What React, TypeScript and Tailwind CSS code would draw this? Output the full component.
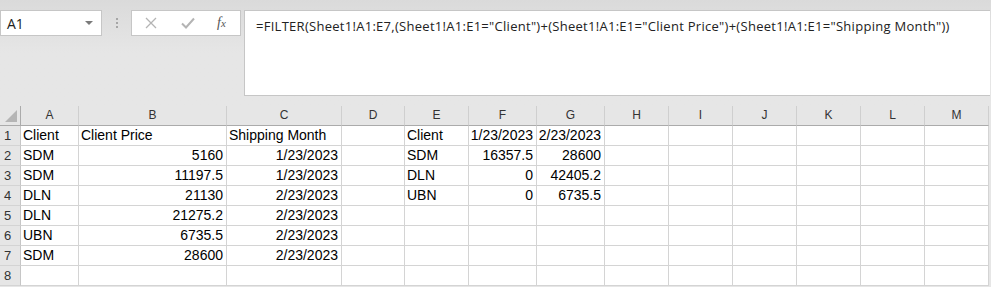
import { Fragment } from 'react';

const columns = [
  { key: 'A', width: 'w-[58px]' },
  { key: 'B', width: 'w-[148px]' },
  { key: 'C', width: 'w-[115px]' },
  { key: 'D', width: 'w-[63px]' },
  { key: 'E', width: 'w-[64px]' },
  { key: 'F', width: 'w-[68px]' },
  { key: 'G', width: 'w-[68px]' },
  { key: 'H', width: 'w-[64px]' },
  { key: 'I', width: 'w-[64px]' },
  { key: 'J', width: 'w-[64px]' },
  { key: 'K', width: 'w-[64px]' },
  { key: 'L', width: 'w-[64px]' },
  { key: 'M', width: 'w-[64px]' },
];

type Cell = string | { v: string; right: true };

const r = (v: string): Cell => ({ v, right: true });

// sheet contents, one array per row, columns A..G
const rows: Cell[][] = [
  ['Client', 'Client Price', 'Shipping Month', '', 'Client', r('1/23/2023'), r('2/23/2023')],
  ['SDM', r('5160'), r('1/23/2023'), '', 'SDM', r('16357.5'), r('28600')],
  ['SDM', r('11197.5'), r('1/23/2023'), '', 'DLN', r('0'), r('42405.2')],
  ['DLN', r('21130'), r('2/23/2023'), '', 'UBN', r('0'), r('6735.5')],
  ['DLN', r('21275.2'), r('2/23/2023')],
  ['UBN', r('6735.5'), r('2/23/2023')],
  ['SDM', r('28600'), r('2/23/2023')],
  [],
];

const formula =
  '=FILTER(Sheet1!A1:E7,(Sheet1!A1:E1="Client")+(Sheet1!A1:E1="Client Price")+(Sheet1!A1:E1="Shipping Month"))';

function FormulaBar() {
  return (
    <div className="h-[106px] pt-[10px] flex items-start bg-gradient-to-b from-[#dadada] via-[#e6e6e6] to-[#e6e6e6]">
      {/* Name box */}
      <div className="w-[102px] h-[26px] bg-white border border-[#c6c6c6] flex items-center justify-between pl-[6px] pr-[8px]">
        <span className="text-[14px] text-[#222] font-['Open_Sans',sans-serif]">A1</span>
        <span className="w-0 h-0 border-l-[4px] border-r-[4px] border-t-[4px] border-l-transparent border-r-transparent border-t-[#7a7a7a]" />
      </div>

      {/* grip dots */}
      <div className="ml-[14px] h-[26px] flex flex-col justify-center gap-[2px]">
        <span className="w-[2px] h-[2px] bg-[#a6a6a6]" />
        <span className="w-[2px] h-[2px] bg-[#a6a6a6]" />
        <span className="w-[2px] h-[2px] bg-[#a6a6a6]" />
      </div>

      {/* cancel / enter / fx */}
      <div className="ml-[13px] w-[110px] h-[26px] bg-white border border-[#c6c6c6] flex items-center pl-[13px]">
        <svg width="12" height="12" viewBox="0 0 12 12" className="shrink-0">
          <path d="M1 1 L11 11 M11 1 L1 11" stroke="#b4b4b4" strokeWidth="1.3" fill="none" />
        </svg>
        <svg width="14" height="12" viewBox="0 0 14 12" className="ml-[24px] shrink-0">
          <path d="M1 6.5 L5 10.5 L13 1.5" stroke="#b4b4b4" strokeWidth="2" fill="none" />
        </svg>
        <span className="ml-[22px] text-[14px] italic text-[#555] font-['Liberation_Serif',serif] leading-none">
          f<span className="text-[11px]">x</span>
        </span>
      </div>

      {/* formula */}
      <div className="ml-[3px] flex-1 mr-[1px] h-[86px] bg-white border border-[#c6c6c6] border-r-0 pl-[11px] pt-[3px]">
        <span className="text-[13px] leading-[18px] tracking-[0.28px] text-[#222] font-['Open_Sans',sans-serif] whitespace-nowrap">
          {formula}
        </span>
      </div>
    </div>
  );
}

function Grid() {
  return (
    <div className="flex flex-col">
      {/* column headers */}
      <div className="flex h-[20px]">
        <div className="w-[21px] h-[20px] bg-[#e6e6e6] border-r border-b border-[#ababab] relative">
          <svg width="12" height="12" viewBox="0 0 12 12" className="absolute left-[5px] top-[4px]">
            <path d="M12 0 L12 12 L0 12 Z" fill="#b5b5b5" />
          </svg>
        </div>
        {columns.map((c) => (
          <div
            key={c.key}
            className={`${c.width} h-[20px] bg-[#e6e6e6] border-r border-b border-r-[#cfcfcf] border-b-[#ababab] text-center text-[12px] leading-[19px] text-[#333]`}
          >
            {c.key}
          </div>
        ))}
      </div>

      {rows.map((row, i) => (
        <div key={i} className="flex h-[20px]">
          <div className="w-[21px] h-[20px] bg-[#e6e6e6] border-r border-b border-r-[#c6c6c6] border-b-[#d4d4d4] pl-[4px] text-[13px] leading-[19px] text-[#333]">
            {i + 1}
          </div>
          {columns.map((c, j) => {
            const cell = row[j];
            const text = cell === undefined ? '' : typeof cell === 'string' ? cell : cell.v;
            const right = cell !== undefined && typeof cell !== 'string';
            return (
              <Fragment key={c.key}>
                <div
                  className={`${c.width} h-[20px] bg-white border-r border-b border-[#d4d4d4] text-[14px] leading-[19px] text-black whitespace-nowrap overflow-hidden ${
                    right ? 'text-right pr-[3px]' : 'pl-[2px]'
                  }`}
                >
                  {text}
                </div>
              </Fragment>
            );
          })}
        </div>
      ))}
    </div>
  );
}

export default function App() {
  return (
    <div className="w-[991px] h-[287px] overflow-hidden bg-[#e6e6e6] font-['Liberation_Sans',Arial,sans-serif]">
      <FormulaBar />
      <Grid />
    </div>
  );
}
